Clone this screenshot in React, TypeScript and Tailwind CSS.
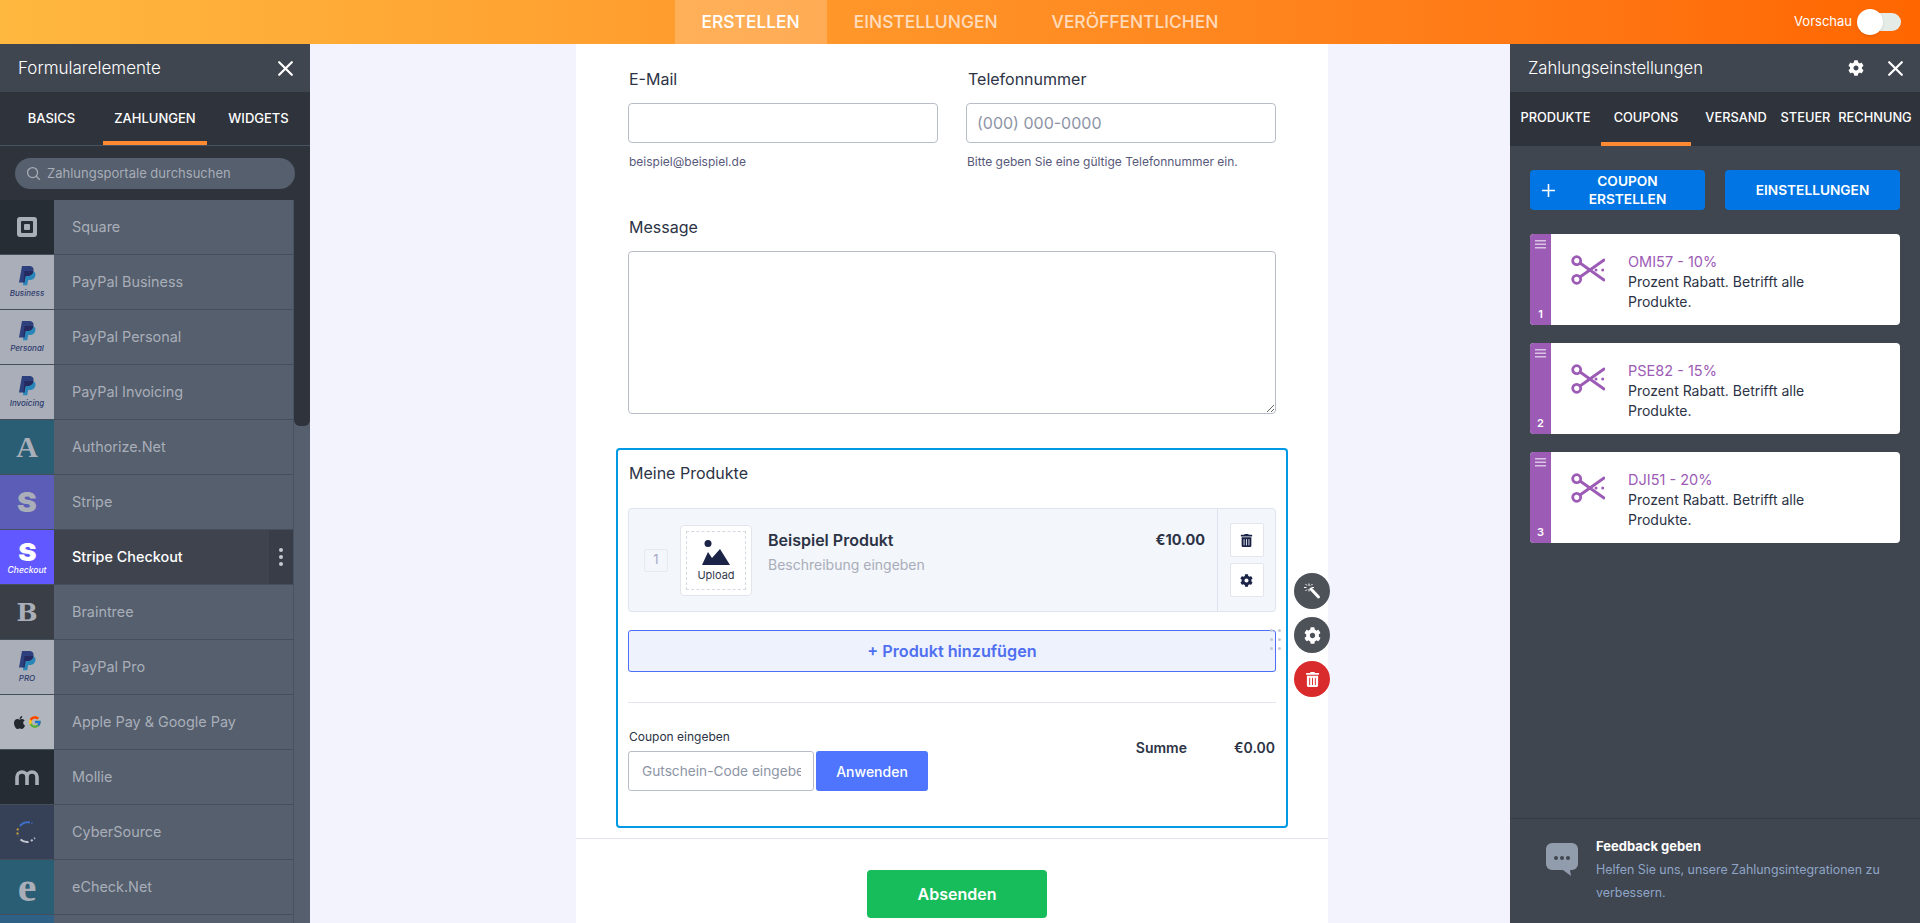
import { FaCog, FaTrashAlt, FaApple } from 'react-icons/fa';
import { FcGoogle } from 'react-icons/fc';

function CloseIcon() {
  return (
    <svg width="15" height="15" viewBox="0 0 15 15" stroke="white" strokeWidth="2.200" strokeLinecap="round">
      <path d="M1.200 1.200l12.600 12.600M13.800 1.200L1.200 13.800" />
    </svg>
  );
}

function WandIcon() {
  return (
    <svg width="18" height="18" viewBox="0 0 18 18" fill="none" stroke="white">
      <path d="M8 7l7.500 8" strokeWidth="3" strokeLinecap="round" />
      <path d="M6 1.500v2.500M6 7v2.500M1 5.500h2.500M8.500 5.500H11M2.500 2l1.500 1.500M2.500 9l1.500-1.500M9.500 2L8 3.500" strokeWidth="1" />
    </svg>
  );
}

function PayPalMark() {
  return (
    <svg width="18" height="20" viewBox="0 0 18 20">
      <path d="M6.500 5h6.800c2.900 0 4.700 1.600 4.100 4.400-.6 3-2.700 4.600-5.600 4.600h-1.600l-1 5.200H5z" fill="#2a86b8" />
      <path d="M4 0h7c3.200 0 5.100 1.800 4.500 4.800-.7 3.400-3 5.200-6.400 5.200H7.500l-1.100 6.400H1z" fill="#2d3f7c" />
      <path d="M6.500 5h6.800c.9 0 1.600.1 2.200.5-.9 2.900-3 4.500-6.400 4.500H7.500l-1.100 6.400-.9 0z" fill="#25295f" />
    </svg>
  );
}

function SideIcon({ name }: { name: string }) {
  if (name.startsWith('PayPal')) {
    const label = name.split(' ')[1];
    return (
      <div className="flex flex-col items-center">
        <PayPalMark />
        <span className="mt-[2px] text-[8px] leading-[10px] italic font-medium text-[#2d3a6e] [font-family:Inter,sans-serif]">
          {label === 'Pro' ? 'PRO' : label}
        </span>
      </div>
    );
  }
  if (name === 'Square') {
    return (
      <div className="flex h-5 w-5 items-center justify-center rounded-[3px] bg-[#a9aeb8]">
        <div className="flex h-3 w-3 items-center justify-center rounded-[1px] bg-[#272d35]">
          <div className="h-[6px] w-[6px] rounded-[1px] bg-[#a9aeb8]" />
        </div>
      </div>
    );
  }
  if (name === 'Authorize.Net') {
    return <span className="text-[30px] font-bold leading-none text-[#a9aeb8] [font-family:'Liberation_Serif',serif]">A</span>;
  }
  if (name === 'Stripe') {
    return <span className="scale-x-110 text-[27px] font-black leading-none text-[#a9aeb8] [font-family:Inter,sans-serif]">S</span>;
  }
  if (name === 'Stripe Checkout') {
    return (
      <div className="flex flex-col items-center text-white">
        <span className="scale-x-110 text-[25px] font-black leading-[25px] [font-family:Inter,sans-serif]">S</span>
        <span className="text-[8.500px] italic font-medium leading-[10px] [font-family:Inter,sans-serif]">Checkout</span>
      </div>
    );
  }
  if (name === 'Braintree') {
    return <span className="text-[25px] font-bold leading-none text-[#a9aeb8] [font-family:'DejaVu_Serif',serif]">B</span>;
  }
  if (name === 'Apple Pay & Google Pay') {
    return (
      <div className="flex items-center gap-[1px]">
        <FaApple className="text-[15px] text-[#23272e]" />
        <FcGoogle className="text-[14px]" />
      </div>
    );
  }
  if (name === 'Mollie') {
    return (
      <svg width="24" height="15" viewBox="0 0 24 15" fill="none" stroke="#a9aeb8" strokeWidth="3.600">
        <path d="M2 15V7a5 5 0 0 1 10 0v8M12 7a5 5 0 0 1 10 0v8" />
      </svg>
    );
  }
  if (name === 'CyberSource') {
    return (
      <svg width="22" height="24" viewBox="0 0 22 24" fill="none" strokeWidth="2">
        <path d="M4 6a10 10 0 0 1 10-3.500" stroke="#3f6fc4" />
        <path d="M15.500 3l1 .5" stroke="#3f6fc4" strokeDasharray="1 2" />
        <path d="M2 8.500a10 10 0 0 0 .5 8" stroke="#c7a43a" strokeDasharray="2 2" />
        <path d="M4.500 19.500a10 10 0 0 0 8 2.500" stroke="#c3c8d0" />
        <path d="M15 21l4-3" stroke="#c3c8d0" strokeDasharray="2 2" />
      </svg>
    );
  }
  if (name === 'eCheck.Net') {
    return <span className="text-[42px] font-bold leading-[34px] text-[#a9aeb8] [font-family:'Liberation_Serif',serif]">e</span>;
  }
  return null;
}

const gateways = [
  { name: 'Square', bg: 'bg-[#272d35]' },
  { name: 'PayPal Business', bg: 'bg-[#a9aeb8]' },
  { name: 'PayPal Personal', bg: 'bg-[#a9aeb8]' },
  { name: 'PayPal Invoicing', bg: 'bg-[#a9aeb8]' },
  { name: 'Authorize.Net', bg: 'bg-[#2a5e75]' },
  { name: 'Stripe', bg: 'bg-[#5b5db6]' },
  { name: 'Stripe Checkout', bg: 'bg-[#6258ff]', active: true },
  { name: 'Braintree', bg: 'bg-[#3a3f47]' },
  { name: 'PayPal Pro', bg: 'bg-[#a9aeb8]' },
  { name: 'Apple Pay & Google Pay', bg: 'bg-[#b1b5bd]' },
  { name: 'Mollie', bg: 'bg-[#262c34]' },
  { name: 'CyberSource', bg: 'bg-[#364057]' },
  { name: 'eCheck.Net', bg: 'bg-[#2a5e75]' },
  { name: '', bg: 'bg-[#2f6085]' },
];

const coupons = [
  { id: 1, title: 'OMI57 - 10%' },
  { id: 2, title: 'PSE82 - 15%' },
  { id: 3, title: 'DJI51 - 20%' },
];

function GatewayRow({ name, bg, active }: { name: string; bg: string; active?: boolean }) {
  return (
    <div className={`flex h-[55px] shrink-0 border-b border-[#454e5b] ${active ? 'bg-[#3e434e]' : ''}`}>
      <div className={`flex w-[54px] shrink-0 items-center justify-center ${bg}`}>
        <SideIcon name={name} />
      </div>
      <div className={`flex flex-1 items-center pl-[18px] text-[14.400px] ${active ? 'font-medium text-white' : 'text-[#a9aeb8]'}`}>
        {name}
      </div>
      {active && (
        <div className="flex w-[24px] flex-col items-center justify-center gap-[3px] bg-[#383d47]">
          <span className="h-1 w-1 rounded-full bg-[#c6c9cf]" />
          <span className="h-1 w-1 rounded-full bg-[#c6c9cf]" />
          <span className="h-1 w-1 rounded-full bg-[#c6c9cf]" />
        </div>
      )}
    </div>
  );
}

function LeftPanel() {
  return (
    <aside className="flex w-[310px] shrink-0 flex-col bg-[#2f333b]">
      <div className="flex h-[48px] shrink-0 items-center justify-between bg-[#40464f] pl-[18px] pr-[17px] text-white">
        <span className="pt-[2px] text-[17px] font-light">Formularelemente</span>
        <CloseIcon />
      </div>
      <div className="flex h-[54px] shrink-0 border-b border-[#495261] text-[13px] font-medium text-white">
        <div className="flex w-[103px] items-center justify-center">BASICS</div>
        <div className="relative flex w-[104px] items-center justify-center">
          ZAHLUNGEN
          <span className="absolute inset-x-0 bottom-0 h-1 bg-[#ff8a32]" />
        </div>
        <div className="flex w-[103px] items-center justify-center">WIDGETS</div>
      </div>
      <div className="flex h-[54px] shrink-0 items-center px-[15px] pt-[1px]">
        <div className="flex h-[31px] w-full items-center gap-[6px] rounded-full bg-[#555f6e] pl-[11px] text-[13px] text-[#a8adb6]">
          <svg width="15" height="15" viewBox="0 0 24 24" fill="none" stroke="#a8adb6" strokeWidth="2">
            <circle cx="10.500" cy="10.500" r="8" />
            <path d="M16.500 16.500L22 22" />
          </svg>
          Zahlungsportale durchsuchen
        </div>
      </div>
      <div className="flex min-h-0 flex-1 overflow-hidden bg-[#555f6e]">
        <div className="min-w-0 flex-1 border-r border-[#495261]">
          {gateways.map((g) => (
            <GatewayRow key={g.name} {...g} />
          ))}
        </div>
        <div className="w-[16px] shrink-0">
          <div className="h-[226px] rounded-b-[6px] bg-[#2f333b]" />
        </div>
      </div>
    </aside>
  );
}

function FormColumn() {
  return (
    <main className="min-w-0 flex-1 overflow-hidden bg-[#f3f3fe]">
      <div className="ml-[266px] h-full w-[752px] bg-white [font-family:Inter,sans-serif]">
        <div className="px-[52px] pt-[23px] text-[#2c3345]">
          <div className="flex gap-[28px]">
            <div className="w-[310px]">
              <div className="mb-3 pl-[1px] text-[16px] leading-6">E-Mail</div>
              <div className="h-10 rounded-[4px] border border-[#b8bdc9] bg-white" />
              <div className="mt-[11px] pl-[1px] text-[12px] leading-4 text-[#57597a]">beispiel@beispiel.de</div>
            </div>
            <div className="w-[310px]">
              <div className="mb-3 pl-[2px] text-[16px] leading-6">Telefonnummer</div>
              <div className="flex h-10 items-center rounded-[4px] border border-[#b8bdc9] bg-white pl-[10px] text-[16px] text-[#8d94a6]">
                (000) 000-0000
              </div>
              <div className="mt-[11px] pl-[1px] text-[12px] leading-4 text-[#57597a]">
                Bitte geben Sie eine gültige Telefonnummer ein.
              </div>
            </div>
          </div>
          <div className="mb-3 mt-[45px] pl-[1px] text-[16px] leading-6">Message</div>
          <textarea className="block h-[163px] w-full rounded-[4px] border border-[#b8bdc9] bg-white" />

          <div className="-mx-3 mt-[34px] h-[380px] rounded-[4px] border-2 border-[#0099e5] px-[10px] pt-[11px]">
            <div className="pl-[1px] text-[16px] leading-6">Meine Produkte</div>

            <div className="mt-[23px] flex h-[104px] rounded-[4px] border border-[#dfe3ef] bg-[#f3f6fb]">
              <div className="flex min-w-0 flex-1 items-center pl-[15px]">
                <div className="flex h-[23px] w-[24px] shrink-0 items-center justify-center rounded-[2px] border border-[#e6e9f2] text-[13px] text-[#a3a8c4]">
                  1
                </div>
                <div className="ml-3 h-[71px] w-[72px] shrink-0 rounded-[4px] border border-[#e3e5ee] bg-white p-[5px]">
                  <div className="flex h-full w-full flex-col items-center justify-center border border-dashed border-[#d5d8e3] pt-[2px]">
                    <svg width="28" height="25" viewBox="0 0 28 25" fill="#1b2347">
                      <circle cx="6" cy="3.500" r="3.500" />
                      <path d="M0 25L6 12l4 6 8-9 10 16z" />
                    </svg>
                    <span className="mt-[4px] text-[11px] leading-[13px] text-[#33394d]">Upload</span>
                  </div>
                </div>
                <div className="ml-[16px] flex h-full min-w-0 flex-1 pr-[12px] pt-[21px]">
                  <div className="flex-1">
                    <div className="text-[16px] font-semibold leading-5">Beispiel Produkt</div>
                    <div className="mt-[5px] text-[14px] leading-5 text-[#a9adb9]">Beschreibung eingeben</div>
                  </div>
                  <div className="text-[14.500px] font-bold leading-5">€10.00</div>
                </div>
              </div>
              <div className="flex w-[58px] shrink-0 flex-col items-center justify-center gap-[6px] border-l border-[#dfe3ef]">
                <div className="flex h-[34px] w-[34px] items-center justify-center rounded-[2px] border border-[#e3e5ee] bg-white">
                  <FaTrashAlt className="text-[13px] text-[#1b2347]" />
                </div>
                <div className="flex h-[34px] w-[34px] items-center justify-center rounded-[2px] border border-[#e3e5ee] bg-white">
                  <FaCog className="text-[13px] text-[#1b2347]" />
                </div>
              </div>
            </div>

            <div className="relative mt-[18px] flex h-[42px] items-center justify-center rounded-[3px] border border-[#4c6ef5] bg-[#eef2fd] text-[16.200px] font-semibold text-[#4f6ff0]">
              + Produkt hinzufügen
              <div className="absolute -right-[6px] -top-[2px] grid grid-cols-2 gap-x-[5px] gap-y-[6px]">
                {[0, 1, 2, 3, 4, 5].map((d) => (
                  <span key={d} className="h-[3px] w-[3px] rounded-full bg-[#c5cad8]" />
                ))}
              </div>
              <div className="absolute -right-[55px] -top-[58px] flex flex-col gap-[8px]">
                <div className="flex h-9 w-9 items-center justify-center rounded-full bg-[#4c5258] text-white">
                  <WandIcon />
                </div>
                <div className="flex h-9 w-9 items-center justify-center rounded-full bg-[#4c5258] text-white">
                  <FaCog className="text-[17px]" />
                </div>
                <div className="flex h-9 w-9 items-center justify-center rounded-full bg-[#d92b2b] text-white">
                  <FaTrashAlt className="text-[15px]" />
                </div>
              </div>
            </div>

            <div className="mt-[30px] border-t border-[#e3e5ee]" />

            <div className="mt-[26px] flex justify-between">
              <div>
                <div className="mb-[6px] pl-[1px] text-[12px] leading-4">Coupon eingeben</div>
                <div className="flex gap-[2px]">
                  <input
                    readOnly
                    placeholder="Gutschein-Code eingeben"
                    className="h-10 w-[186px] rounded-[3px] border border-[#b8bdc9] bg-white pl-[13px] pr-3 text-[13.700px] placeholder:text-[#8d94a6]"
                  />
                  <div className="flex h-10 w-[112px] items-center justify-center rounded-[3px] bg-[#4f75ff] text-[14px] font-medium text-white">
                    Anwenden
                  </div>
                </div>
              </div>
              <div className="mr-[1px] mt-[9px] flex h-5 text-[14px] font-semibold leading-5">
                <span>Summe</span>
                <span className="ml-[47px] w-[41px] text-right">€0.00</span>
              </div>
            </div>
          </div>
        </div>

        <div className="mt-[10px] flex justify-center border-t border-[#e3e5ee] pl-[10px] pt-[31px]">
          <div className="flex h-12 w-[180px] items-center justify-center rounded-[4px] bg-[#18bd5b] text-[16px] font-semibold text-white">
            Absenden
          </div>
        </div>
      </div>
    </main>
  );
}

function CouponCard({ id, title }: { id: number; title: string }) {
  return (
    <div className="flex h-[91px] overflow-hidden rounded-[4px] bg-white">
      <div className="flex w-[21px] shrink-0 flex-col items-center justify-between bg-[#9c5bb5] pb-[3px] pt-[6px] text-white">
        <svg width="11" height="9" viewBox="0 0 11 9" fill="#d9c3e3">
          <rect width="11" height="1.500" />
          <rect y="3.500" width="11" height="1.500" />
          <rect y="7" width="11" height="1.500" />
        </svg>
        <span className="text-[11px] font-semibold leading-4">{id}</span>
      </div>
      <div className="w-[77px] shrink-0 pl-[20px] pt-[21px]">
        <svg width="34" height="30" viewBox="0 0 34 30" fill="none" stroke="#9c5bb5" strokeWidth="2.800" strokeLinecap="round">
          <circle cx="5.700" cy="5.700" r="4" />
          <circle cx="5.700" cy="24.300" r="4" />
          <path d="M9 8l24 17M9 22L33 5" />
          <circle cx="25" cy="15" r="1.500" fill="#9c5bb5" stroke="none" />
          <circle cx="31.700" cy="15" r="1.500" fill="#9c5bb5" stroke="none" />
        </svg>
      </div>
      <div className="pt-[18px] text-[14px] leading-5">
        <div className="text-[14.500px] text-[#9c5bb5]">{title}</div>
        <div className="w-[190px] text-[#2c3345]">Prozent Rabatt. Betrifft alle Produkte.</div>
      </div>
    </div>
  );
}

function RightPanel() {
  return (
    <aside className="flex w-[410px] shrink-0 flex-col bg-[#40464f]">
      <div className="flex h-[48px] shrink-0 items-center justify-between pl-[18px] pr-[17px] text-white">
        <span className="pt-[2px] text-[16.700px] font-light">Zahlungseinstellungen</span>
        <div className="flex items-center gap-[24px]">
          <FaCog className="text-[16px]" />
          <CloseIcon />
        </div>
      </div>
      <div className="flex h-[54px] shrink-0 bg-[#2f333b] text-[12.800px] font-medium text-white">
        <div className="flex w-[91px] items-center justify-center pb-[2px]">PRODUKTE</div>
        <div className="relative flex w-[90px] items-center justify-center pb-[2px]">
          COUPONS
          <span className="absolute inset-x-0 bottom-0 h-1 bg-[#ff8a32]" />
        </div>
        <div className="flex w-[90px] items-center justify-center pb-[2px]">VERSAND</div>
        <div className="flex w-[49px] items-center justify-center pb-[2px]">STEUER</div>
        <div className="flex w-[90px] items-center justify-center pb-[2px]">RECHNUNG</div>
      </div>
      <div className="flex-1 px-[20px] pt-[24px]">
        <div className="flex gap-[20px]">
          <div className="flex h-10 w-[175px] items-center rounded-[4px] bg-[#0075e3] pl-[11px] text-[13.700px] font-semibold leading-[18px] text-white">
            <svg width="15" height="15" viewBox="0 0 15 15" stroke="white" strokeWidth="1.600">
              <path d="M7.500 1v13M1 7.500h13" />
            </svg>
            <span className="flex-1 pr-[6px] text-center">
              COUPON
              <br />
              ERSTELLEN
            </span>
          </div>
          <div className="flex h-10 w-[175px] items-center justify-center rounded-[4px] bg-[#0075e3] text-[13.700px] font-semibold text-white">
            EINSTELLUNGEN
          </div>
        </div>
        <div className="mt-[24px] flex flex-col gap-[18px]">
          {coupons.map((c) => (
            <CouponCard key={c.id} {...c} />
          ))}
        </div>
      </div>
      <div className="flex h-[105px] shrink-0 border-t border-[#353a43] pl-[36px] pt-[17px]">
        <svg className="mt-[7px] shrink-0" width="32" height="33" viewBox="0 0 32 33" fill="#919cac">
          <path d="M6 0h20a6 6 0 0 1 6 6v15a6 6 0 0 1-6 6h-2l1 6-8-6H6a6 6 0 0 1-6-6V6a6 6 0 0 1 6-6z" />
          <circle cx="10" cy="15" r="2" fill="#40464f" />
          <circle cx="16" cy="15" r="2" fill="#40464f" />
          <circle cx="22" cy="15" r="2" fill="#40464f" />
        </svg>
        <div className="ml-[18px]">
          <div className="text-[13px] font-bold leading-5 text-white">Feedback geben</div>
          <div className="mt-[2px] w-[300px] text-[12.400px] leading-[23px] text-[#8fa5c8]">
            Helfen Sie uns, unsere Zahlungsintegrationen zu verbessern.
          </div>
        </div>
      </div>
    </aside>
  );
}

export default function App() {
  return (
    <div className="flex h-[923px] flex-col overflow-hidden [font-family:Inter,sans-serif]">
      <header className="relative flex h-[44px] shrink-0 justify-center bg-gradient-to-r from-[#ffb83f] to-[#ff6600] [font-family:Inter,sans-serif]">
        <div className="flex h-full items-center bg-white/20 px-[27px] text-[17.400px] font-medium text-white">ERSTELLEN</div>
        <div className="flex h-full items-center px-[27px] text-[17.400px] font-medium text-white/70">EINSTELLUNGEN</div>
        <div className="flex h-full items-center px-[27px] text-[17.400px] font-medium text-white/70">VERÖFFENTLICHEN</div>
        <div className="absolute right-[19px] top-0 flex h-full items-center text-[13px] text-white">
          Vorschau
          <div className="relative ml-[18px] h-[18px] w-[31px] rounded-full bg-[#e5ece8]">
            <span className="absolute -left-[13px] -top-1 h-[26px] w-[26px] rounded-full bg-white shadow" />
          </div>
        </div>
      </header>
      <div className="flex min-h-0 flex-1">
        <LeftPanel />
        <FormColumn />
        <RightPanel />
      </div>
    </div>
  );
}
